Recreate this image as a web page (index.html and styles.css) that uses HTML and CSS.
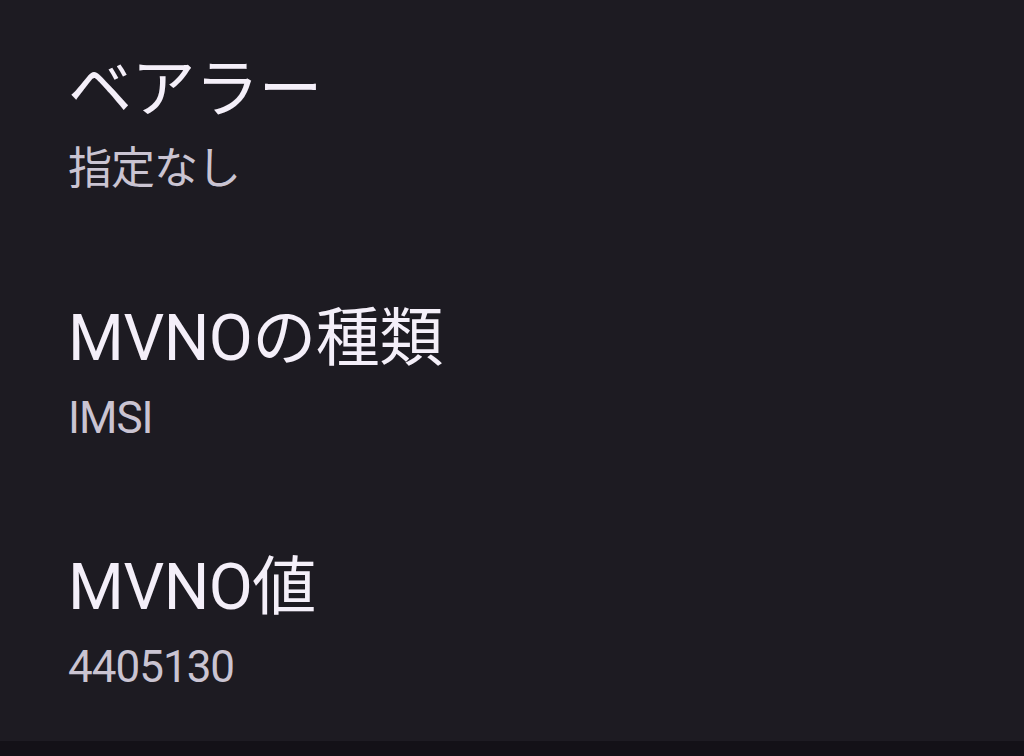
FILE: index.html
```html
<!DOCTYPE html>
<html lang="ja">
<head>
<meta charset="utf-8">
<title>APN</title>
<link rel="stylesheet" href="styles.css">
</head>
<body>
<div class="screen">
  <ul class="prefs">
    <li class="pref">
      <div class="pref-title">ベアラー</div>
      <div class="pref-summary">指定なし</div>
    </li>
    <li class="pref">
      <div class="pref-title">MVNOの種類</div>
      <div class="pref-summary">IMSI</div>
    </li>
    <li class="pref">
      <div class="pref-title">MVNO値</div>
      <div class="pref-summary">4405130</div>
    </li>
  </ul>
  <div class="nav-bar"></div>
</div>
</body>
</html>
```

FILE: styles.css
```css
html, body {
  margin: 0;
  padding: 0;
  background: #1d1b22;
}

.screen {
  width: 1024px;
  height: 756px;
  display: flex;
  flex-direction: column;
  overflow: hidden;
  font-family: Roboto, "Noto Sans CJK JP", sans-serif;
}

.prefs {
  list-style: none;
  margin: 0;
  padding: 0;
  flex: 1 1 auto;
  min-height: 0;
  overflow: hidden;
}

.pref {
  padding: 52px 68px;
  display: flex;
  flex-direction: column;
  gap: 13px;
}

.pref-title {
  font-size: 64px;
  line-height: 76px;
  letter-spacing: -0.5px;
  color: #f4eff9;
}

.pref-summary {
  font-size: 44px;
  line-height: 56px;
  letter-spacing: -1px;
  color: #cac4d2;
}

.nav-bar {
  flex: 0 0 15px;
  background: #131117;
}
```
